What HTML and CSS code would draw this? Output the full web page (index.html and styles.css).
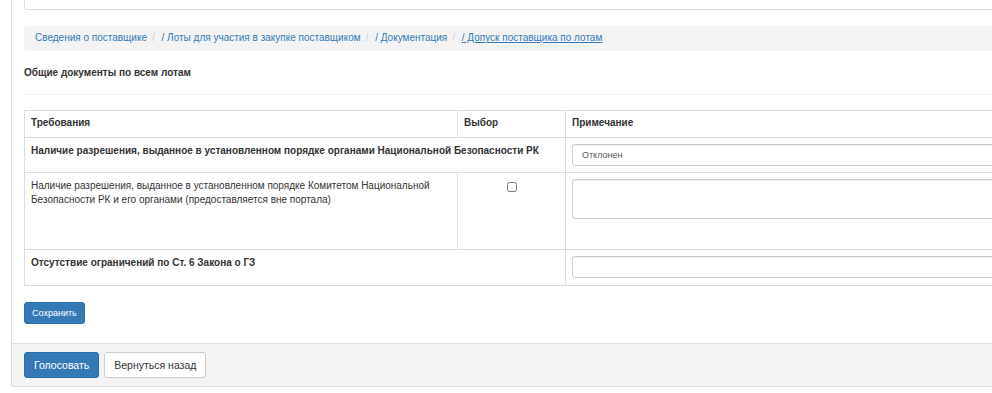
FILE: index.html
```html
<!DOCTYPE html>
<html lang="ru">
<head>
    <meta charset="UTF-8">
    <title>Допуск поставщика по лотам</title>
    <link rel="stylesheet" href="styles.css">
</head>
<body>

    <div class="panel">
        <div class="panel-body">
            <div class="prev-box"></div>

            <ul class="breadcrumb">
                <li><a href="#">Сведения о поставщике</a></li>
                <li><a href="#">/ Лоты для участия в закупке поставщиком</a></li>
                <li><a href="#">/ Документация</a></li>
                <li><a href="#" class="active">/ Допуск поставщика по лотам</a></li>
            </ul>

            <h5 class="section-title">Общие документы по всем лотам</h5>
            <hr>

            <table class="req-table">
                <thead>
                    <tr>
                        <th class="col-req">Требования</th>
                        <th class="col-choice">Выбор</th>
                        <th>Примечание</th>
                    </tr>
                </thead>
                <tbody>
                    <tr>
                        <td colspan="2" class="group">Наличие разрешения, выданное в установленном порядке органами Национальной Безопасности РК</td>
                        <td>
                            <select class="form-control">
                                <option>Отклонен</option>
                            </select>
                        </td>
                    </tr>
                    <tr class="tall">
                        <td>Наличие разрешения, выданное в установленном порядке Комитетом Национальной Безопасности РК и его органами (предоставляется вне портала)</td>
                        <td class="check"><input type="checkbox"></td>
                        <td><textarea class="form-control"></textarea></td>
                    </tr>
                    <tr>
                        <td colspan="2" class="group">Отсутствие ограничений по Ст. 6 Закона о ГЗ</td>
                        <td><input type="text" class="form-control input"></td>
                    </tr>
                </tbody>
            </table>

            <button type="button" class="btn btn-primary btn-sm">Сохранить</button>
        </div>

        <div class="panel-footer">
            <button type="button" class="btn btn-primary">Голосовать</button>
            <button type="button" class="btn btn-default">Вернуться назад</button>
        </div>
    </div>

</body>
</html>
```

FILE: styles.css
```css
body {
    font-family: "Liberation Sans", Arial, sans-serif;
    font-size: 10px;
    line-height: 1.42857;
    color: #333;
    margin: 0;
    overflow: hidden;
    background: #fff;
}
.panel {
    margin-left: 11px;
    width: 1100px;
    border: 1px solid #ddd;
    border-top: none;
    border-radius: 0 0 3px 3px;
}
.panel-body {
    padding: 0 12px 19px 12px;
}
.prev-box {
    height: 9px;
    border: 1px solid #ddd;
    border-top: none;
    border-radius: 0 0 3px 3px;
}
.breadcrumb {
    list-style: none;
    margin: 16px 0 0 0;
    padding: 5px 11px;
    height: 15px;
    background-color: #f4f4f4;
    border-radius: 3px;
    display: flex;
}
.breadcrumb li + li:before {
    content: "/\00a0";
    padding: 0 4px 0 5px;
    color: #ccc;
}
.breadcrumb a {
    color: #337ab7;
    text-decoration: none;
}
.breadcrumb a.active {
    text-decoration: underline;
}
.section-title {
    font-size: 10px;
    font-weight: bold;
    margin: 15px 0 0 0;
}
hr {
    border: 0;
    border-top: 1px solid #eee;
    margin: 14px 0 15px 0;
}
.req-table {
    width: 100%;
    border-collapse: collapse;
    margin-bottom: 16px;
}
.req-table th,
.req-table td {
    border: 1px solid #ddd;
    padding: 6px;
    text-align: left;
    vertical-align: top;
}
.req-table th {
    padding-top: 5px;
    padding-bottom: 6px;
    font-weight: bold;
}
.col-req {
    width: 420px;
}
.col-choice {
    width: 95px;
}
.req-table td.group {
    font-weight: bold;
}
.req-table td.check {
    text-align: center;
}
.check input {
    margin: 3px 0 0 0;
    width: 10px;
    height: 10px;
}
.tall td {
    height: 64px;
}
.form-control {
    display: block;
    width: 100%;
    box-sizing: border-box;
    height: 22px;
    padding: 3px 9px;
    font-family: inherit;
    font-size: 9px;
    color: #555;
    background: #fff;
    border: 1px solid #ccc;
    border-radius: 3px;
    box-shadow: inset 0 1px 1px rgba(0, 0, 0, 0.075);
    margin: 0;
}
select.form-control {
    appearance: none;
}
textarea.form-control {
    height: 40px;
    resize: none;
}
.form-control.input {
    margin-bottom: 1px;
}
.btn {
    font-family: inherit;
    font-size: 10.5px;
    height: 26px;
    padding: 0 9px;
    border: 1px solid transparent;
    border-radius: 3px;
    cursor: pointer;
}
.btn-sm {
    font-size: 9px;
    height: 22px;
    padding: 0 7px;
}
.btn-primary {
    background-color: #337ab7;
    border-color: #2e6da4;
    color: white;
}
.btn-default {
    background-color: #fff;
    border-color: #ccc;
    color: #333;
    margin-left: 2px;
}
.panel-footer {
    background-color: #f4f4f4;
    border-top: 1px solid #ddd;
    padding: 8px 12px;
    display: flex;
    gap: 3px;
}
```
